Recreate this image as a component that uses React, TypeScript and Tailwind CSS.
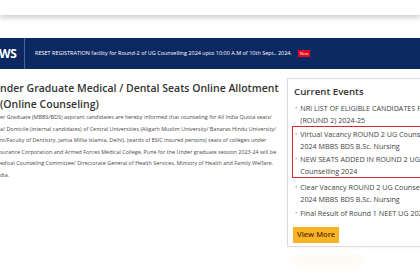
import React from 'react';

const paragraphLines = [
  'er Graduate (MBBS/BDS) aspirant candidates are hereby informed that counseling for All India Quota seats/',
  'a/ Domicile (internal candidates) of Central Universities (Aligarh Muslim University/ Banaras Hindu University/',
  'ni/Faculty of Dentistry, Jamia Millia Islamia, Delhi), (wards of ESIC insured persons) seats of colleges under',
  'surance Corporation and Armed Forces Medical College, Pune for the Under graduate session 2023-24 will be',
  'edical Counseling Committee/ Directorate General of Health Services, Ministry of Health and Family Welfare,',
  'dia.',
];

const Bullet: React.FC<{ lines: string[] }> = ({ lines }) => (
  <li className="flex gap-[3px]">
    <span className="text-[#888] leading-[12px] text-[6px]">•</span>
    <div>
      {lines.map((l, i) => (
        <div key={i} className="whitespace-nowrap leading-[12px]">
          {l}
        </div>
      ))}
    </div>
  </li>
);

export default function App() {
  return (
    <div
      className="w-[420px] h-[280px] overflow-hidden bg-white relative"
      style={{ fontFamily: '"Open Sans", "Liberation Sans", sans-serif' }}
    >
      {/* header edge */}
      <div className="h-[15px] bg-white shadow-[0_3px_5px_rgba(0,0,0,0.18)]" />

      {/* news bar */}
      <div className="mt-[23px] h-[31px] bg-[#0b2862] flex items-center text-white">
        <div className="-ml-[21px] w-[46px] h-full flex items-center pl-[4px] border-r border-[#4a64a0]">
          <span className="text-[12px] font-bold tracking-tight">NEWS</span>
        </div>
        <span className="ml-[10px] text-[5.5px] whitespace-nowrap">
          RESET REGISTRATION facility for Round-2 of UG Counselling 2024 upto 10:00 A.M of 10th Sept., 2024.
        </span>
        <span className="ml-[6px] bg-[#e00a1e] text-white text-[4px] px-[2px] h-[7px] flex items-center">New</span>
      </div>

      {/* content */}
      <div className="flex mt-[10px]">
        <div className="w-[280px] shrink-0">
          <h1 className="text-[#333] text-[10.5px] font-semibold leading-[16px] pt-[1px]">
            <div className="whitespace-nowrap">nder Graduate Medical / Dental Seats Online Allotment</div>
            <div className="whitespace-nowrap">(Online Counseling)</div>
          </h1>
          <div className="text-[#4a4a4a] text-[5.45px]">
            {paragraphLines.map((l, i) => (
              <div key={i} className="whitespace-nowrap leading-[11.5px]">
                {l}
              </div>
            ))}
          </div>
        </div>

        <div className="ml-[7px] -mt-[1px] w-[160px] shrink-0 h-[169px] border border-[#dcdcdc] bg-white px-[5px] pt-[5px] shadow-[0_1px_2px_rgba(0,0,0,0.05)]">
          <h2 className="text-[#333] text-[9.7px] font-semibold leading-[16px] ml-[1px]">Current Events</h2>
          <ul className="mt-[2px] text-[#444] text-[7.2px]">
            <div className="pl-[2px]">
              <Bullet lines={['NRI LIST OF ELIGIBLE CANDIDATES FOR', '(ROUND 2) 2024-25']} />
            </div>
            <div className="-ml-[1px] border-[1.5px] border-[#d8262c] pl-[2px] pt-[1px]">
              <Bullet lines={['Virtual Vacancy ROUND 2 UG Counselling', '2024 MBBS BDS B.Sc. Nursing']} />
              <div className="mt-[1px]">
                <Bullet lines={['NEW SEATS ADDED IN ROUND 2 UG', 'Counselling 2024']} />
              </div>
            </div>
            <div className="mt-[3px] pl-[2px]">
              <Bullet lines={['Clear Vacancy ROUND 2 UG Counselling', '2024 MBBS BDS B.Sc. Nursing']} />
            </div>
            <div className="mt-[2px] pl-[2px]">
              <Bullet lines={['Final Result of Round 1 NEET UG 2024']} />
            </div>
          </ul>
          <button className="mt-[6px] h-[16px] px-[4px] bg-[#f7b423] text-[#6b2a0a] text-[7.5px] font-semibold">
            View More
          </button>
        </div>
      </div>

      {/* faint glow below panel */}
      <div className="absolute left-[292px] top-[258px] w-[70px] h-[6px] rounded-full bg-[#f8e2c4] blur-[4px] opacity-40" />
    </div>
  );
}
